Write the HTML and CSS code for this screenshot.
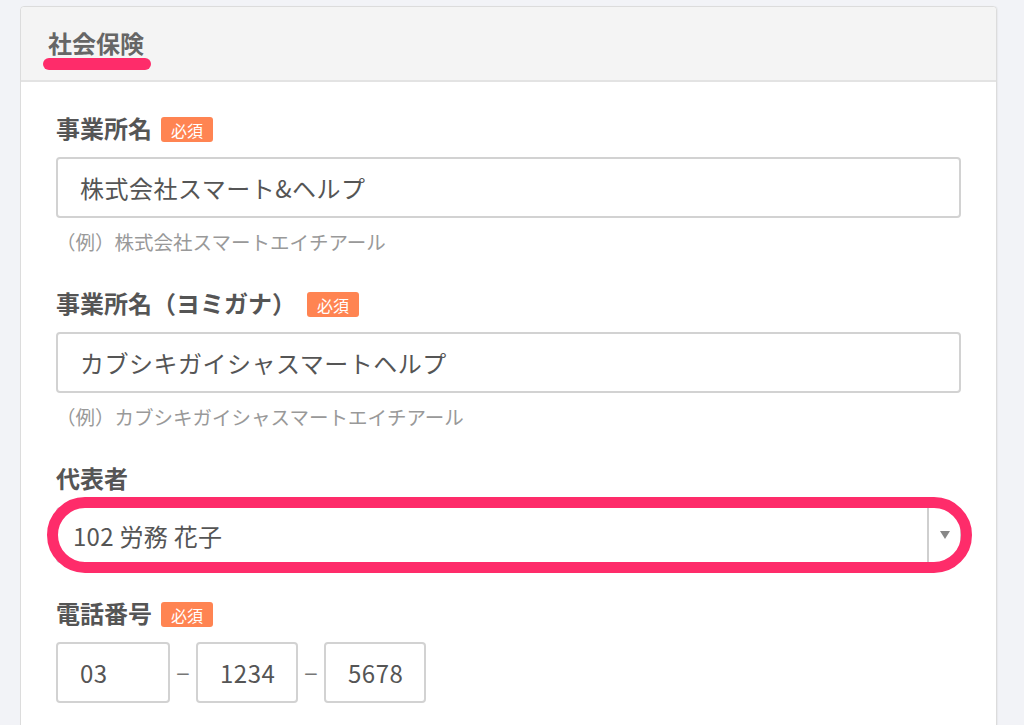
FILE: index.html
```html
<!DOCTYPE html>
<html lang="ja">
<head>
<meta charset="utf-8">
<title>社会保険</title>
<link rel="stylesheet" href="styles.css">
</head>
<body>
<div class="card">
  <div class="card-header">
    <h2 class="card-title">社会保険</h2>
  </div>
  <div class="card-body">
    <div class="field">
      <div class="label">事業所名<span class="badge">必須</span></div>
      <div class="input">株式会社スマート&amp;ヘルプ</div>
      <div class="hint">（例）株式会社スマートエイチアール</div>
    </div>
    <div class="field">
      <div class="label">事業所名（ヨミガナ）<span class="badge badge-wide">必須</span></div>
      <div class="input">カブシキガイシャスマートヘルプ</div>
      <div class="hint">（例）カブシキガイシャスマートエイチアール</div>
    </div>
    <div class="field field-select">
      <div class="label">代表者</div>
      <div class="select">
        <span class="select-value">102 労務 花子</span>
        <span class="select-arrow"><span class="triangle"></span></span>
        <span class="ring"></span>
      </div>
    </div>
    <div class="field">
      <div class="label">電話番号<span class="badge">必須</span></div>
      <div class="phone">
        <div class="input phone-1">03</div>
        <span class="dash">−</span>
        <div class="input phone-2">1234</div>
        <span class="dash">−</span>
        <div class="input phone-3">5678</div>
      </div>
    </div>
  </div>
</div>
</body>
</html>
```

FILE: styles.css
```css
html, body {
  margin: 0;
  height: 725px;
  overflow: hidden;
}
body {
  background: #f2f3f7;
  font-family: "Noto Sans CJK JP", "Noto Sans", sans-serif;
  padding: 6px 0 0 20px;
  box-sizing: border-box;
}
.card {
  width: 977px;
  box-sizing: border-box;
  background: #fff;
  border: 1px solid #dcdcdc;
  border-radius: 4px;
  box-shadow: 1px 0 1px rgba(0,0,0,0.04);
}
.card-header {
  background: #f4f4f4;
  border-bottom: 2px solid #e3e3e3;
  border-radius: 4px 4px 0 0;
  padding: 19px 27px 20px;
}
.card-title {
  position: relative;
  display: inline-block;
  margin: 0;
  font-size: 24px;
  line-height: 34px;
  font-weight: 700;
  color: #666;
}
.card-title::after {
  content: "";
  position: absolute;
  left: -5px;
  right: -7px;
  top: 32px;
  height: 12px;
  border-radius: 6px;
  background: #fe2c6a;
}
.card-body {
  padding: 29px 35px 60px;
}
.field {
  margin-bottom: 30px;
}
.field-select {
  margin-bottom: 33px;
}
.label {
  display: flex;
  align-items: center;
  font-size: 24px;
  line-height: 34px;
  font-weight: 700;
  color: #555;
  margin-bottom: 12px;
}
.badge {
  display: inline-flex;
  align-items: center;
  justify-content: center;
  width: 52px;
  height: 25px;
  margin-left: 9px;
  margin-top: 3px;
  border-radius: 3px;
  background: #ff8452;
  color: #fff;
  font-size: 16px;
  font-weight: 400;
  line-height: 1;
}
.badge-wide {
  margin-left: 11px;
}
.input {
  box-sizing: border-box;
  height: 61px;
  border: 2px solid #d2d2d2;
  border-radius: 4px;
  padding: 0 22px;
  display: flex;
  align-items: center;
  font-size: 24px;
  letter-spacing: 0.5px;
  color: #555;
  background: #fff;
}
.hint {
  margin-top: 10px;
  font-size: 19.5px;
  line-height: 28px;
  color: #999;
}
.select {
  position: relative;
  box-sizing: border-box;
  height: 56px;
  border: 1px solid #cfcfcf;
  border-radius: 4px;
  display: flex;
  align-items: center;
}
.select-value {
  flex: 1;
  padding-left: 16px;
  font-size: 24px;
  letter-spacing: 0.3px;
  color: #555;
}
.select-arrow {
  width: 31px;
  align-self: stretch;
  border-left: 2px solid #cfcfcf;
  display: flex;
  align-items: center;
  justify-content: center;
}
.triangle {
  width: 0;
  height: 0;
  border-left: 5px solid transparent;
  border-right: 5px solid transparent;
  border-top: 8px solid #888;
}
.ring {
  position: absolute;
  left: -10px;
  right: -12px;
  top: -11px;
  bottom: -11px;
  border: 11px solid #fe2c6a;
  border-radius: 40px;
}
.phone {
  display: flex;
  align-items: center;
  gap: 6px;
}
.phone .input {
  padding: 0 0 0 22px;
}
.phone-1 { width: 114px; }
.phone-2 { width: 102px; }
.phone-3 { width: 102px; }
.dash {
  width: 14px;
  text-align: center;
  font-size: 24px;
  line-height: 1;
  color: #777;
}
```
